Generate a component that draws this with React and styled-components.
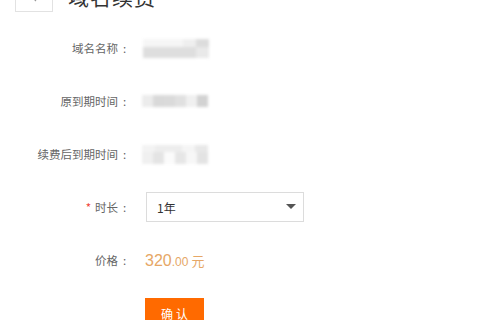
import React from "react";
import styled, { createGlobalStyle } from "styled-components";

const GlobalStyle = createGlobalStyle`
  html, body {
    margin: 0;
    padding: 0;
    background: #fff;
    font-family: "Noto Sans CJK SC", "Noto Sans", sans-serif;
    overflow: hidden;
  }
`;

const Page = styled.div`
  width: 480px;
  height: 320px;
  overflow: hidden;
`;

const Header = styled.div`
  display: flex;
  align-items: center;
  gap: 15px;
  height: 32px;
  margin-top: -20px;
  padding-left: 15px;
`;

const BackButton = styled.div`
  width: 38px;
  height: 32px;
  box-sizing: border-box;
  border: 1px solid #e2e2e2;
  display: flex;
  align-items: center;
  justify-content: center;
  color: #999;
`;

const Title = styled.h1`
  margin: 0;
  font-size: 21px;
  font-weight: 400;
  color: #333;
  letter-spacing: 1px;
`;

const Form = styled.div`
  display: flex;
  flex-direction: column;
  gap: 23px;
  margin-top: 21px;
`;

const Row = styled.div`
  display: grid;
  grid-template-columns: 130px 1fr;
  column-gap: 15px;
  align-items: center;
  height: 30px;
`;

const Label = styled.div`
  display: flex;
  justify-content: flex-end;
  align-items: center;
  font-size: 11.5px;
  color: #666;
  white-space: nowrap;
`;

const Colon = styled.span`
  margin-left: 5px;
  width: 7px;
`;

const Star = styled.span`
  color: #f04134;
  margin-right: 4px;
`;

const Redacted = styled.div`
  display: flex;
  flex-direction: column;
  width: 66px;
  margin-left: ${(p) => p.offset || 0}px;
  filter: blur(1.5px);
`;

const Strip = styled.div`
  display: flex;
  height: ${(p) => p.h}px;
`;

const Cell = styled.span`
  flex: ${(p) => p.grow || 1};
  background: ${(p) => p.color};
`;

const Select = styled.div`
  width: 158px;
  height: 30px;
  box-sizing: border-box;
  border: 1px solid #dcdcdc;
  display: flex;
  align-items: center;
  justify-content: space-between;
  padding: 0 7px 0 10px;
  font-size: 12px;
  color: #333;
  margin-left: 1px;
`;

const Price = styled.div`
  color: #e6a766;
  font-family: "Liberation Sans", "Noto Sans CJK SC", sans-serif;
  display: flex;
  align-items: baseline;
`;

const Amount = styled.span`
  font-size: 16px;
`;

const Cents = styled.span`
  font-size: 12px;
`;

const Unit = styled.span`
  font-family: "Noto Sans CJK SC", sans-serif;
  font-size: 13px;
  margin-left: 3px;
`;

const Button = styled.button`
  width: 59px;
  height: 30px;
  border: none;
  background: #ff6a00;
  color: #fff;
  font-size: 12px;
  letter-spacing: 3px;
  text-indent: 3px;
  font-family: "Noto Sans CJK SC", sans-serif;
  padding: 0;
`;

const redactions = [
  {
    offset: -2,
    strips: [
      { h: 8, cells: [["#f6f6f6", 3], ["#efefef", 1], ["#dcdcdc", 1]] },
      { h: 11, cells: [["#dedede", 4], ["#e9e9e9", 1]] },
    ],
  },
  {
    offset: -3,
    strips: [
      { h: 12, cells: [["#ececec", 1], ["#d9d9d9", 1], ["#dadada", 1], ["#e0e0e0", 1], ["#f0f0f0", 1], ["#d2d2d2", 1]] },
    ],
  },
  {
    offset: -3,
    strips: [
      { h: 7, cells: [["#f3f3f3", 1], ["#ededed", 2], ["#f5f5f5", 1], ["#e8e8e8", 1]] },
      { h: 12, cells: [["#f0f0f0", 1], ["#e4e4e4", 1], ["#fbfbfb", 1], ["#e6e6e6", 1], ["#f7f7f7", 1], ["#e3e3e3", 1]] },
    ],
  },
];

const Blur = ({ data }) => (
  <Redacted offset={data.offset}>
    {data.strips.map((s, i) => (
      <Strip key={i} h={s.h}>
        {s.cells.map(([c, g], j) => (
          <Cell key={j} color={c} grow={g} />
        ))}
      </Strip>
    ))}
  </Redacted>
);

const FieldLabel = ({ children, required }) => (
  <Label>
    {required && <Star>*</Star>}
    {children}
    <Colon>:</Colon>
  </Label>
);

export default function App() {
  return (
    <Page>
      <GlobalStyle />
      <Header>
        <BackButton>
          <svg width="10" height="12" viewBox="0 0 10 12">
            <path d="M7 1 L2 6 L7 11" fill="none" stroke="#999" strokeWidth="1.2" />
          </svg>
        </BackButton>
        <Title>域名续费</Title>
      </Header>
      <Form>
        <Row>
          <FieldLabel>域名名称</FieldLabel>
          <Blur data={redactions[0]} />
        </Row>
        <Row>
          <FieldLabel>原到期时间</FieldLabel>
          <Blur data={redactions[1]} />
        </Row>
        <Row>
          <FieldLabel>续费后到期时间</FieldLabel>
          <Blur data={redactions[2]} />
        </Row>
        <Row>
          <FieldLabel required>时长</FieldLabel>
          <Select>
            <span>1年</span>
            <svg width="10" height="6" viewBox="0 0 10 6">
              <path d="M0 0 H10 L5 5 Z" fill="#555" />
            </svg>
          </Select>
        </Row>
        <Row>
          <FieldLabel>价格</FieldLabel>
          <Price>
            <Amount>320</Amount>
            <Cents>.00</Cents>
            <Unit>元</Unit>
          </Price>
        </Row>
        <Row>
          <span />
          <Button>确认</Button>
        </Row>
      </Form>
    </Page>
  );
}
